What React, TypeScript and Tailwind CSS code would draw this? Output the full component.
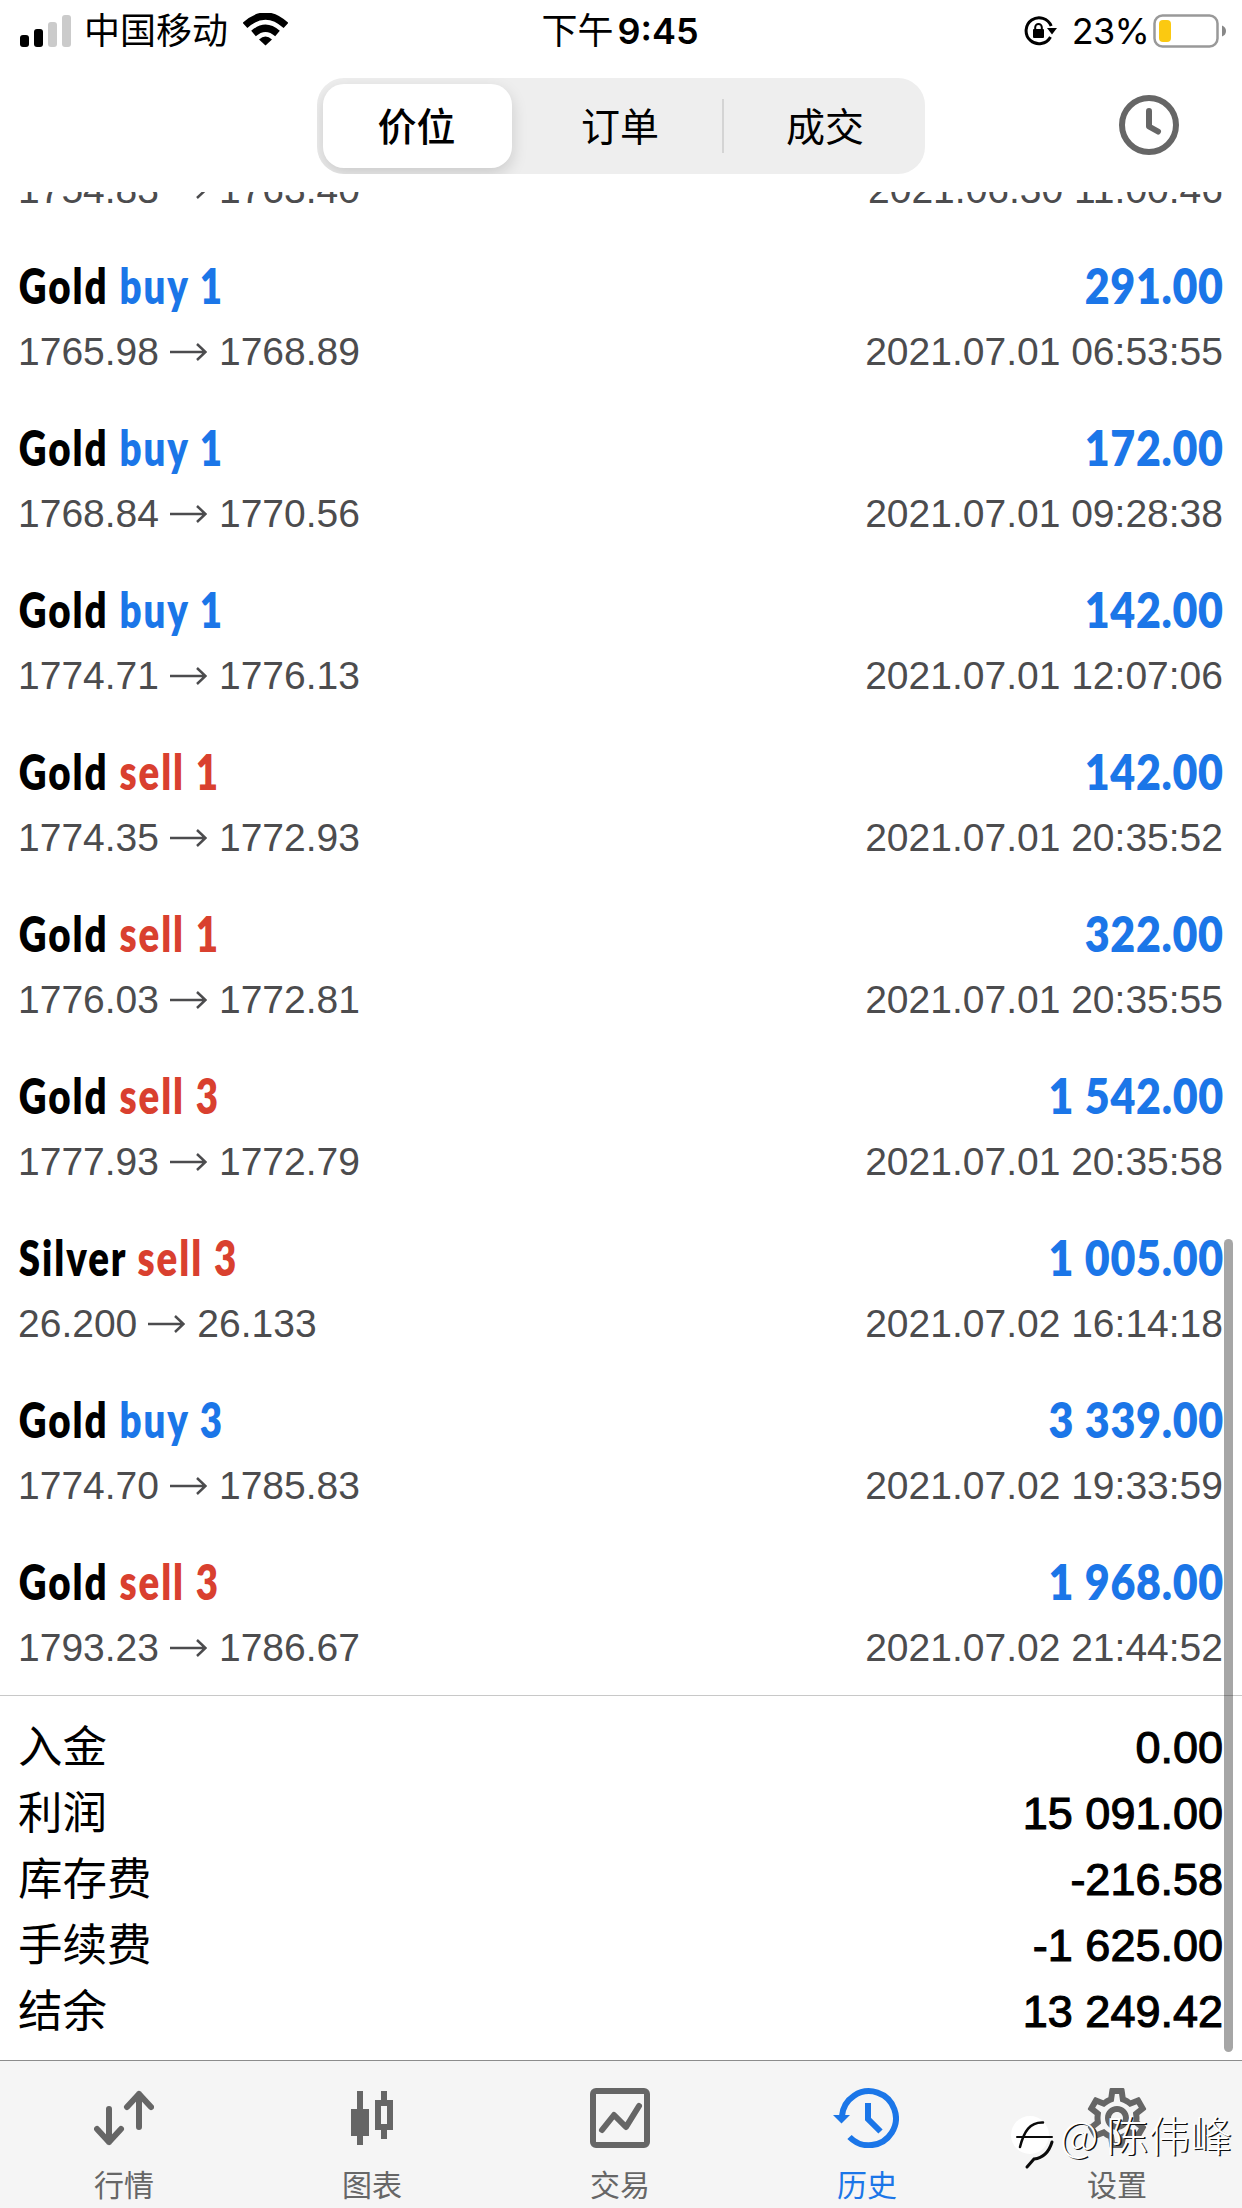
import { MdOutlineSettings } from "react-icons/md";

type Deal = {
  symbol: string;
  side: "buy" | "sell";
  volume: number;
  open: string;
  close: string;
  profit: string;
  time: string;
};

const deals: Deal[] = [
  { symbol: "Gold", side: "buy", volume: 1, open: "1765.98", close: "1768.89", profit: "291.00", time: "2021.07.01 06:53:55" },
  { symbol: "Gold", side: "buy", volume: 1, open: "1768.84", close: "1770.56", profit: "172.00", time: "2021.07.01 09:28:38" },
  { symbol: "Gold", side: "buy", volume: 1, open: "1774.71", close: "1776.13", profit: "142.00", time: "2021.07.01 12:07:06" },
  { symbol: "Gold", side: "sell", volume: 1, open: "1774.35", close: "1772.93", profit: "142.00", time: "2021.07.01 20:35:52" },
  { symbol: "Gold", side: "sell", volume: 1, open: "1776.03", close: "1772.81", profit: "322.00", time: "2021.07.01 20:35:55" },
  { symbol: "Gold", side: "sell", volume: 3, open: "1777.93", close: "1772.79", profit: "1 542.00", time: "2021.07.01 20:35:58" },
  { symbol: "Silver", side: "sell", volume: 3, open: "26.200", close: "26.133", profit: "1 005.00", time: "2021.07.02 16:14:18" },
  { symbol: "Gold", side: "buy", volume: 3, open: "1774.70", close: "1785.83", profit: "3 339.00", time: "2021.07.02 19:33:59" },
  { symbol: "Gold", side: "sell", volume: 3, open: "1793.23", close: "1786.67", profit: "1 968.00", time: "2021.07.02 21:44:52" },
];

const summary = [
  { label: "入金", value: "0.00" },
  { label: "利润", value: "15 091.00" },
  { label: "库存费", value: "-216.58" },
  { label: "手续费", value: "-1 625.00" },
  { label: "结余", value: "13 249.42" },
];

function StatusBar() {
  return (
    <div className="grid h-[62px] shrink-0 grid-cols-3 items-center pl-5 pr-4 font-['Inter','Noto_Sans_CJK_SC',sans-serif] text-[36px] leading-none">
      <div className="flex items-center">
        <svg width="52" height="32" viewBox="0 0 52 32">
          <rect x="0" y="20" width="9" height="12" rx="3" />
          <rect x="14" y="14" width="9" height="18" rx="3" />
          <rect x="28" y="7" width="9" height="25" rx="3" fill="#cbcbcb" />
          <rect x="42" y="0" width="9" height="32" rx="3" fill="#cbcbcb" />
        </svg>
        <span className="ml-3 whitespace-nowrap">中国移动</span>
        <svg className="-mt-1 ml-[15px]" width="45" height="33" viewBox="0 0 45 33">
          <path d="M2 12.500Q22.500-6.500 43 12.500" fill="none" stroke="#000" strokeWidth="7" />
          <path d="M10.500 20.500Q22.500 10 34.500 20.500" fill="none" stroke="#000" strokeWidth="7" />
          <path d="M16 26.500Q22.500 20.500 29 26.500L22.500 32.500Z" />
        </svg>
      </div>
      <div className="flex items-center justify-center gap-1 pr-1.5">
        <span>下午</span>
        <span className="font-semibold">9:45</span>
      </div>
      <div className="flex items-center justify-end">
        <svg width="34" height="32" viewBox="0 0 34 32" fill="none">
          <path d="M26.500 22A13 13 0 1 1 27.200 11" stroke="#000" strokeWidth="3" />
          <path d="M23 13H33L28 19.500Z" fill="#000" />
          <rect x="9" y="14" width="11" height="9" rx="1" fill="#000" />
          <path d="M11.200 15V12.300A3.300 3.300 0 0 1 17.800 12.300V15" stroke="#000" strokeWidth="2" />
        </svg>
        <span className="ml-3.5 tracking-[-0.8px]">23%</span>
        <svg className="-mr-px ml-1" width="74" height="34" viewBox="0 0 74 34">
          <rect x="1.500" y="1.500" width="63" height="31" rx="8" fill="none" stroke="#999" strokeWidth="2.500" />
          <rect x="6" y="6" width="12" height="22" rx="4" fill="#fbc911" />
          <path d="M69 11.500Q73 13 73 17T69 22.500Z" fill="#888" />
        </svg>
      </div>
    </div>
  );
}

function NavBar() {
  return (
    <div className="grid h-[130px] shrink-0 grid-cols-[1fr_608px_1fr] items-start pt-4 font-['Noto_Sans_CJK_SC',sans-serif] text-[39px]">
      <div />
      <div className="flex h-24 items-center overflow-hidden rounded-[27px] bg-[#eeeeee] p-1.5">
        <button className="h-[84px] w-[189px] rounded-[21px] bg-white pb-1 pr-0.5 font-medium shadow-[0_6px_16px_rgba(0,0,0,0.15)]">价位</button>
        <button className="h-full flex-1 pb-1 pl-1.5">订单</button>
        <div className="h-[54px] w-0.5 bg-[#d4d4d4]" />
        <button className="h-full w-[195px] pb-1 pl-[7px]">成交</button>
      </div>
      <div className="flex h-[94px] items-center justify-end pr-[63px]">
        <svg width="60" height="60" viewBox="0 0 60 60" fill="none" stroke="#666" strokeWidth="6">
          <circle cx="30" cy="30" r="27" />
          <path d="M30 16V31.500L39 36.500" strokeLinecap="round" strokeLinejoin="round" />
        </svg>
      </div>
    </div>
  );
}

function DealDetails({ open, close, time }: { open: string; close: string; time: string }) {
  return (
    <div className="flex h-11 items-center justify-between whitespace-nowrap pr-px text-[39px] leading-[44px] text-[#4c4c4e]">
      <div className="flex items-center">
        <span>{open}</span>
        <svg className="ml-[11px] mr-3" width="37" height="18" viewBox="0 0 37 18" fill="none" stroke="#4c4c4e" strokeWidth="2.500">
          <path d="M0 9H35M27 1L35.500 9L27 17" />
        </svg>
        <span>{close}</span>
      </div>
      <span>{time}</span>
    </div>
  );
}

function DealRow({ deal }: { deal: Deal }) {
  return (
    <div className="h-[162px] pt-[18px]">
      <div className="flex h-[60px] justify-between whitespace-nowrap font-['Lato',sans-serif] text-[50px] leading-[60px]">
        <div className="origin-left scale-x-[0.77] pl-px font-extrabold tracking-[2.5px]">
          {deal.symbol}{" "}
          <span className={deal.side === "buy" ? "text-[#1b76e8]" : "text-[#d9402f]"}>
            {deal.side} {deal.volume}
          </span>
        </div>
        <div className="origin-right scale-x-[0.86] font-extrabold tracking-[0.8px] text-[#1b76e8]">{deal.profit}</div>
      </div>
      <div className="mt-[15px]">
        <DealDetails open={deal.open} close={deal.close} time={deal.time} />
      </div>
    </div>
  );
}

function Watermark() {
  return (
    <div className="absolute bottom-9 right-2.5 flex items-center whitespace-nowrap font-['Noto_Sans_CJK_SC',sans-serif] text-[42px] font-light leading-[56px] text-white [text-shadow:1.5px_1px_0_#111]">
      <svg width="50" height="60" viewBox="0 0 50 60" fill="none" stroke="#0a0a0a" strokeLinecap="round">
        <circle cx="20" cy="23" r="19" fill="#fff" stroke="none" />
        <path d="M10 35C14 19 20 10 33 10.500" strokeWidth="2.500" />
        <path d="M7 25H42" strokeWidth="2" />
        <path d="M42 30C39 40 33 46 24 47L17 55" strokeWidth="3" />
      </svg>
      <span className="-mt-4 w-[46px]">@</span>
      <span className="-mt-4">陈伟峰</span>
    </div>
  );
}

function TabBar() {
  return (
    <nav className="relative grid h-[148px] shrink-0 grid-cols-5 border-t border-[#8c8c8c] bg-[#f5f5f5] pr-0.5 font-['Noto_Sans_CJK_SC',sans-serif] text-[30px] leading-[40px] text-[#666]">
      <div className="flex flex-col items-center pt-[27px]">
        <svg width="60" height="60" viewBox="0 0 60 60" fill="none" stroke="currentColor" strokeWidth="6" strokeLinecap="round" strokeLinejoin="round">
          <path d="M15 21V54M3 41L15 54L27 41" />
          <path d="M45 39V6M33 19L45 6L57 19" />
        </svg>
        <span className="mt-[15px]">行情</span>
      </div>
      <div className="flex flex-col items-center pt-[27px]">
        <svg width="60" height="60" viewBox="0 0 60 60" fill="currentColor">
          <path d="M15 3H21V21H27V48H21V57H15V48H9V21H15Z" />
          <path fillRule="evenodd" d="M39 3H45V12H51V42H45V51H39V42H33V12H39ZM39 18V36H45V18Z" />
        </svg>
        <span className="mt-[15px]">图表</span>
      </div>
      <div className="flex flex-col items-center pt-[27px]">
        <svg width="60" height="60" viewBox="0 0 60 60" fill="none" stroke="currentColor" strokeWidth="6" strokeLinecap="round" strokeLinejoin="round">
          <rect x="3" y="3" width="54" height="54" rx="3" />
          <path d="M12 42L24 27L36 39L49 18" />
        </svg>
        <span className="mt-[15px]">交易</span>
      </div>
      <div className="flex flex-col items-center pr-0.5 pt-[27px] text-[#1b76e8]">
        <svg className="-ml-0.5" width="66" height="60" viewBox="0 0 66 60" fill="none" stroke="currentColor" strokeWidth="6">
          <path d="M9 28A27 27 0 1 1 16.500 49" />
          <path d="M0 27H17L8.500 35.500Z" fill="currentColor" stroke="none" />
          <path d="M35 15V31L47.500 43.500" />
        </svg>
        <span className="mt-[15px]">历史</span>
      </div>
      <div className="flex flex-col items-center pl-0.5 pt-[21px]">
        <MdOutlineSettings size={72} />
        <span className="mt-[9px]">设置</span>
      </div>
      <Watermark />
    </nav>
  );
}

export default function App() {
  return (
    <main className="flex h-[2208px] w-[1242px] flex-col overflow-hidden bg-white font-['Liberation_Sans','Noto_Sans_CJK_SC',sans-serif] text-black">
      <StatusBar />
      <NavBar />
      <section className="relative flex-1">
        {/* row scrolled half way under the header */}
        <div className="flex h-[45px] flex-col justify-end overflow-hidden px-[18px] pb-[25px]">
          <DealDetails open="1754.83" close="1763.40" time="2021.06.30 11:00:46" />
        </div>
        <div className="px-[18px]">
          {deals.map((deal) => (
            <DealRow key={deal.time} deal={deal} />
          ))}
        </div>
        <div className="border-t border-[#c8c8c8] px-[18px] pt-[17px]">
          {summary.map((item) => (
            <div key={item.label} className="flex h-[66px] items-center justify-between text-[45px]">
              <span className="pb-[5px] font-['Noto_Sans_CJK_SC',sans-serif] text-[44.500px] leading-[60px]">{item.label}</span>
              <span className="pr-px pt-[3px] leading-[60px] [-webkit-text-stroke:1.1px_black]">{item.value}</span>
            </div>
          ))}
        </div>
        <div className="absolute bottom-2 right-[9px] h-[813px] w-[9px] rounded-full bg-black/35" />
      </section>
      <TabBar />
    </main>
  );
}
